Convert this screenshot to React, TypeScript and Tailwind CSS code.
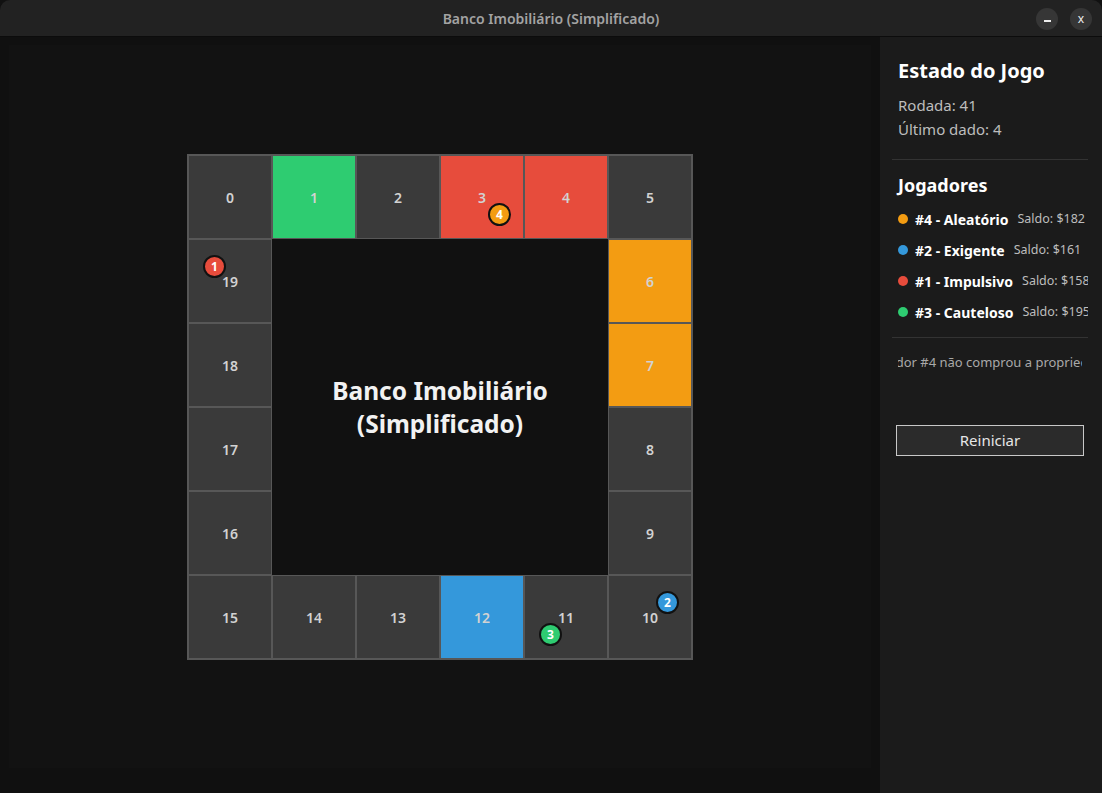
import React from "react";

type Player = { id: number; name: string; saldo: number; color: string; pos: number };

const CELL_COLORS: Record<number, string> = {
  1: "bg-[#2ecc71]",
  3: "bg-[#e74c3c]",
  4: "bg-[#e74c3c]",
  6: "bg-[#f39c12]",
  7: "bg-[#f39c12]",
  12: "bg-[#3498db]",
};

const PLAYERS: Player[] = [
  { id: 4, name: "Aleatório", saldo: 182, color: "bg-[#f39c12]", pos: 3 },
  { id: 2, name: "Exigente", saldo: 161, color: "bg-[#3498db]", pos: 10 },
  { id: 1, name: "Impulsivo", saldo: 158, color: "bg-[#e74c3c]", pos: 19 },
  { id: 3, name: "Cauteloso", saldo: 195, color: "bg-[#2ecc71]", pos: 11 },
];

// token corner by player id
const TOKEN_SPOT: Record<number, string> = {
  1: "left-[14px] top-[15px]",
  2: "left-[47px] top-[15px]",
  3: "left-[14px] top-[47px]",
  4: "left-[47px] top-[47px]",
};

// grid placement of each board cell
const CELL_PLACE: Record<number, string> = {
  0: "col-start-1 row-start-1",
  1: "col-start-2 row-start-1",
  2: "col-start-3 row-start-1",
  3: "col-start-4 row-start-1",
  4: "col-start-5 row-start-1",
  5: "col-start-6 row-start-1",
  6: "col-start-6 row-start-2",
  7: "col-start-6 row-start-3",
  8: "col-start-6 row-start-4",
  9: "col-start-6 row-start-5",
  10: "col-start-6 row-start-6",
  11: "col-start-5 row-start-6",
  12: "col-start-4 row-start-6",
  13: "col-start-3 row-start-6",
  14: "col-start-2 row-start-6",
  15: "col-start-1 row-start-6",
  16: "col-start-1 row-start-5",
  17: "col-start-1 row-start-4",
  18: "col-start-1 row-start-3",
  19: "col-start-1 row-start-2",
};

function Cell({ n }: { n: number }) {
  const here = PLAYERS.filter((p) => p.pos === n);
  return (
    <div
      className={`relative flex items-center justify-center border border-[#575757] text-[14px] font-semibold text-[#d2d2d2] ${
        CELL_COLORS[n] ?? "bg-[#3a3a3a]"
      } ${CELL_PLACE[n]}`}
    >
      {n}
      {here.map((p) => (
        <div
          key={p.id}
          className={`absolute ${TOKEN_SPOT[p.id]} flex h-[23px] w-[23px] items-center justify-center rounded-full border-2 border-[#111] ${p.color} text-[12px] font-bold text-white`}
        >
          {p.id}
        </div>
      ))}
    </div>
  );
}

export default function App() {
  return (
    <div
      className="flex h-[793px] w-[1102px] flex-col overflow-hidden bg-[#111]"
      style={{ fontFamily: '"Noto Sans", "Open Sans", sans-serif' }}
    >
      {/* ================= Title bar ================= */}
      <div className="relative flex h-[37px] shrink-0 items-center justify-center rounded-t-[10px] border-b border-[#0c0c0c] bg-[#222]">
        <span className="text-[14px] font-semibold text-[#a3a3a3]">Banco Imobiliário (Simplificado)</span>
        <div className="absolute right-[10px] top-[8px] flex gap-[12px]">
          <button className="flex h-[22px] w-[22px] items-center justify-center rounded-full bg-[#363636] text-[12px] leading-none text-[#eee]">
            <span className="mb-[2px] block h-[1.5px] w-[7px] translate-y-[3px] bg-[#eee]" />
          </button>
          <button className="flex h-[22px] w-[22px] items-center justify-center rounded-full bg-[#363636] text-[12px] leading-none text-[#eee]">
            x
          </button>
        </div>
      </div>

      <div className="flex min-h-0 flex-1">
        {/* ================= Board area ================= */}
        <div className="flex flex-1 bg-[#101010] px-[9px] pb-[25px] pt-[8px]">
          <div className="flex flex-1 justify-center bg-[#121212] pt-[109px]">
            <div className="grid h-[506px] w-[506px] grid-cols-[repeat(6,84px)] grid-rows-[repeat(6,84px)] border border-[#575757]">
              {Array.from({ length: 20 }, (_, i) => (
                <Cell key={i} n={i} />
              ))}
              <div className="col-start-2 col-end-6 row-start-2 row-end-6 flex items-center justify-center bg-[#111]">
                <h1 className="text-center text-[24.5px] font-bold leading-[33px] text-[#f2f2f2]">
                  Banco Imobiliário
                  <br />
                  (Simplificado)
                </h1>
              </div>
            </div>
          </div>
        </div>

        {/* ================= Sidebar ================= */}
        <aside className="flex w-[222px] shrink-0 flex-col bg-[#1b1b1b] pl-[12px] pr-[14px] pt-[20px]">
          <div className="px-[6px]">
            <h2 className="text-[20px] font-bold leading-[28px] text-white">Estado do Jogo</h2>
            <p className="mt-[8px] text-[15px] leading-[24px] text-[#bdbdbd]">Rodada: 41</p>
            <p className="text-[15px] leading-[24px] text-[#bdbdbd]">Último dado: 4</p>
          </div>

          <div className="mt-[18px] h-px bg-[#333]" />

          <div className="overflow-hidden pl-[6px]">
            <h3 className="mt-[12px] text-[18px] font-bold leading-[26px] text-white">Jogadores</h3>
            <ul className="mt-[11px] flex flex-col gap-[11px]">
              {PLAYERS.map((p) => (
                <li key={p.id} className="flex h-[20px] items-center whitespace-nowrap">
                  <span className={`h-[10px] w-[10px] shrink-0 rounded-full ${p.color}`} />
                  <span className="ml-[7px] text-[14px] font-bold text-white">
                    #{p.id} - {p.name}
                  </span>
                  <span className="ml-[9px] text-[12.5px] text-[#bdbdbd]">Saldo: ${p.saldo}</span>
                </li>
              ))}
            </ul>
          </div>

          <div className="mt-[15px] h-px bg-[#333]" />

          <div className="mx-[6px] mt-[15px] flex justify-center overflow-hidden whitespace-nowrap">
            <span className="text-[13px] text-[#a9a9a9]">Jogador #4 não comprou a propriedade</span>
          </div>

          <button className="mx-[4px] mt-[52px] h-[31px] border border-[#c8c8c8] bg-[#2b2b2b] text-[15px] text-[#e6e6e6]">
            Reiniciar
          </button>
        </aside>
      </div>
    </div>
  );
}
